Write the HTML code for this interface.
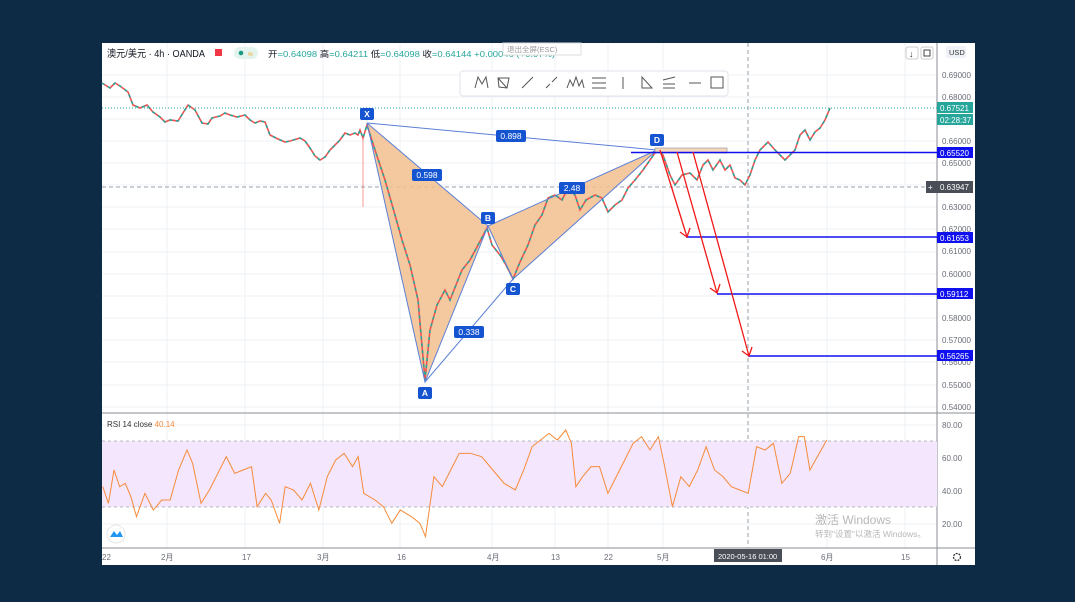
<!DOCTYPE html>
<html><head><meta charset="utf-8"><style>
body{margin:0;width:1075px;height:602px;background:#0d2b45;overflow:hidden;font-family:"Liberation Sans","Noto Sans CJK SC",sans-serif}
svg{position:absolute;left:0;top:0}
.t{font-size:8px;fill:#6a6d78}
</style></head><body>
<svg width="1075" height="602" viewBox="0 0 1075 602">
<rect x="102" y="43" width="873" height="522" fill="#fff"/>
<g stroke="#eef2f6" stroke-width="1">
<line x1="102" y1="75" x2="937" y2="75"/><line x1="102" y1="97" x2="937" y2="97"/><line x1="102" y1="119" x2="937" y2="119"/><line x1="102" y1="141" x2="937" y2="141"/><line x1="102" y1="163" x2="937" y2="163"/><line x1="102" y1="185" x2="937" y2="185"/><line x1="102" y1="207" x2="937" y2="207"/><line x1="102" y1="229" x2="937" y2="229"/><line x1="102" y1="252" x2="937" y2="252"/><line x1="102" y1="274" x2="937" y2="274"/><line x1="102" y1="296" x2="937" y2="296"/><line x1="102" y1="318" x2="937" y2="318"/><line x1="102" y1="340" x2="937" y2="340"/><line x1="102" y1="362" x2="937" y2="362"/><line x1="102" y1="385" x2="937" y2="385"/><line x1="102" y1="407" x2="937" y2="407"/>
<line x1="102" y1="425" x2="937" y2="425"/><line x1="102" y1="458" x2="937" y2="458"/><line x1="102" y1="491" x2="937" y2="491"/><line x1="102" y1="524" x2="937" y2="524"/>
<line x1="167" y1="43" x2="167" y2="548"/><line x1="245" y1="43" x2="245" y2="548"/><line x1="323" y1="43" x2="323" y2="548"/><line x1="400" y1="43" x2="400" y2="548"/><line x1="492" y1="43" x2="492" y2="548"/><line x1="555" y1="43" x2="555" y2="548"/><line x1="608" y1="43" x2="608" y2="548"/><line x1="663" y1="43" x2="663" y2="548"/><line x1="827" y1="43" x2="827" y2="548"/><line x1="905" y1="43" x2="905" y2="548"/>
</g>
<line x1="937" y1="43" x2="937" y2="565" stroke="#8a8e96"/>
<line x1="102" y1="413" x2="975" y2="413" stroke="#8a8e96"/>
<line x1="102" y1="548" x2="975" y2="548" stroke="#8a8e96"/>
<line x1="102" y1="108" x2="937" y2="108" stroke="#26a69a" stroke-dasharray="1,2"/>
<line x1="102" y1="187" x2="937" y2="187" stroke="#9aa0a8" stroke-dasharray="4,3"/>
<line x1="748" y1="43" x2="748" y2="548" stroke="#9aa0a8" stroke-dasharray="4,3"/>
<polygon points="367,123 425,382 488,226" fill="#f2c08e" fill-opacity=".85"/>
<polygon points="488,226 513,279 657,150" fill="#f2c08e" fill-opacity=".85"/>
<polyline fill="none" stroke="#ef5350" stroke-width="1.6" points="102,83 110,88 115,83 120,86 128,92 133,105 140,108 147,105 153,112 160,117 165,122 170,120 178,121 183,113 188,105 195,110 202,123 208,124 212,118 220,116 225,113 230,115 237,117 245,115 250,120 255,123 260,121 265,122 270,135 278,139 285,142 290,141 300,138 305,141 310,148 315,156 320,160 325,157 330,150 335,145 340,140 345,133 350,135 355,133 358,135 360,130 363,138 367,125 375,150 385,180 395,215 402,240 410,265 418,300 425,380 430,330 437,305 445,290 450,300 456,285 462,270 470,260 478,245 487,228 492,245 500,255 506,265 513,279 520,262 528,245 535,225 542,215 548,198 555,195 562,200 568,188 575,195 580,210 586,200 595,195 602,198 608,212 615,205 622,200 628,188 635,180 643,170 650,160 657,150 663,155 670,175 675,185 682,175 690,173 697,180 703,165 708,160 713,170 720,160 725,170 730,165 735,178 740,180 745,185 750,175 755,160 760,150 768,142 775,150 780,155 785,160 790,155 795,150 800,135 805,130 810,140 815,132 820,128 825,120 830,108"/>
<polyline fill="none" stroke="#26a69a" stroke-width="1.6" stroke-dasharray="3,4" points="102,83 110,88 115,83 120,86 128,92 133,105 140,108 147,105 153,112 160,117 165,122 170,120 178,121 183,113 188,105 195,110 202,123 208,124 212,118 220,116 225,113 230,115 237,117 245,115 250,120 255,123 260,121 265,122 270,135 278,139 285,142 290,141 300,138 305,141 310,148 315,156 320,160 325,157 330,150 335,145 340,140 345,133 350,135 355,133 358,135 360,130 363,138 367,125 375,150 385,180 395,215 402,240 410,265 418,300 425,380 430,330 437,305 445,290 450,300 456,285 462,270 470,260 478,245 487,228 492,245 500,255 506,265 513,279 520,262 528,245 535,225 542,215 548,198 555,195 562,200 568,188 575,195 580,210 586,200 595,195 602,198 608,212 615,205 622,200 628,188 635,180 643,170 650,160 657,150 663,155 670,175 675,185 682,175 690,173 697,180 703,165 708,160 713,170 720,160 725,170 730,165 735,178 740,180 745,185 750,175 755,160 760,150 768,142 775,150 780,155 785,160 790,155 795,150 800,135 805,130 810,140 815,132 820,128 825,120 830,108"/>
<line x1="363" y1="138" x2="363" y2="207" stroke="#ef5350" stroke-opacity=".6"/>
<g stroke="#5b7fd6" stroke-width="1" fill="none">
<polyline points="367,123 425,382 488,226 513,279 657,150"/>
<line x1="367" y1="123" x2="488" y2="226"/><line x1="425" y1="382" x2="513" y2="279"/>
<line x1="488" y1="226" x2="657" y2="150"/><line x1="367" y1="123" x2="657" y2="150"/>
</g>
<rect x="655" y="148" width="72" height="5" fill="#f6d7bd" stroke="#999" stroke-width=".7"/>
<g stroke="#1010ee" stroke-width="1.5">
<line x1="631" y1="152.5" x2="937" y2="152.5"/><line x1="686" y1="237" x2="937" y2="237"/><line x1="717" y1="294" x2="937" y2="294"/><line x1="748" y1="356" x2="937" y2="356"/></g>
<g stroke="#f01818" stroke-width="1.3" fill="none">
<line x1="660" y1="150" x2="687" y2="237"/><polyline points="680,232 687,237 690,228"/>
<line x1="677" y1="152" x2="717" y2="293"/><polyline points="710,288 717,293 720,284"/>
<line x1="693" y1="152" x2="749" y2="356"/><polyline points="742,351 749,356 752,347"/>
</g>
<g font-size="8.5" fill="#fff" text-anchor="middle" font-weight="bold">
<rect x="360" y="108" width="14" height="12" rx="2" fill="#1554d1"/><text x="367" y="117">X</text>
<rect x="418" y="387" width="14" height="12" rx="2" fill="#1554d1"/><text x="425" y="396">A</text>
<rect x="481" y="212" width="14" height="12" rx="2" fill="#1554d1"/><text x="488" y="221">B</text>
<rect x="506" y="283" width="14" height="12" rx="2" fill="#1554d1"/><text x="513" y="292">C</text>
<rect x="650" y="134" width="14" height="12" rx="2" fill="#1554d1"/><text x="657" y="143">D</text>
<g font-weight="normal"><rect x="496" y="130" width="30" height="12" rx="2" fill="#1554d1"/><text x="511" y="139">0.898</text>
<rect x="412" y="169" width="30" height="12" rx="2" fill="#1554d1"/><text x="427" y="178">0.598</text>
<rect x="559" y="182" width="26" height="12" rx="2" fill="#1554d1"/><text x="572" y="191">2.48</text>
<rect x="454" y="326" width="30" height="12" rx="2" fill="#1554d1"/><text x="469" y="335">0.338</text></g>
</g>
<rect x="460" y="71" width="268" height="25" rx="3" fill="#fff" stroke="#e0e3eb"/>
<g stroke="#555" stroke-width="1" fill="none">
<path d="M475 88 L478 77 L482 84 L486 77 L488 88"/><path d="M498 78 L509 78 L507 88 L499 87 Z M498 78 L507 88"/><path d="M522 88 L533 77"/><path d="M546 88 L550 84 M552 82 L557 77"/><path d="M567 88 L570 80 L573 86 L576 77 L579 86 L582 80 L584 88"/><path d="M592 78 H606 M592 83 H606 M592 88 H606"/><path d="M623 77 V89"/><path d="M642 77 L642 88 L652 88 Z"/><path d="M663 80 L675 77 M663 84 H675 M663 88 H675"/><path d="M689 83 H701"/><rect x="711" y="77" width="12" height="11"/>
</g>
<text x="107" y="57" font-size="10" fill="#131722" textLength="98" lengthAdjust="spacingAndGlyphs">澳元/美元 · 4h · OANDA</text>
<rect x="215" y="49" width="7" height="7" fill="#f23645"/>
<rect x="234" y="47" width="24" height="12" rx="6" fill="#e3f3ee"/><circle cx="241" cy="53" r="2.3" fill="#1a9985"/><text x="248" y="57" font-size="9" fill="#f7a21b">≈</text>
<text x="268" y="57" font-size="8.5" fill="#131722" textLength="287" lengthAdjust="spacingAndGlyphs">开<tspan fill="#26a69a">=0.64098</tspan> 高<tspan fill="#26a69a">=0.64211</tspan> 低<tspan fill="#26a69a">=0.64098</tspan> 收<tspan fill="#26a69a">=0.64144 +0.00046 (+0.07%)</tspan></text>
<rect x="503" y="43" width="78" height="12" fill="#fff" stroke="#ddd"/><text x="507" y="52" font-size="7.5" fill="#999">退出全屏(ESC)</text>
<rect x="906" y="47" width="12" height="12" rx="2" fill="#fff" stroke="#ccc"/><text x="909" y="57" font-size="9" fill="#333">↓</text>
<rect x="921" y="47" width="12" height="12" rx="2" fill="#fff" stroke="#ccc"/><rect x="924" y="50" width="6" height="6" fill="none" stroke="#444"/>
<rect x="946" y="46" width="20" height="12" rx="2" fill="#eef1f5"/><text x="949" y="55" font-size="7.5" fill="#333">USD</text>
<g class="t"><text x="942" y="78">0.69000</text><text x="942" y="100">0.68000</text><text x="942" y="144">0.66000</text><text x="942" y="166">0.65000</text><text x="942" y="210">0.63000</text><text x="942" y="232">0.62000</text><text x="942" y="254">0.61000</text><text x="942" y="277">0.60000</text><text x="942" y="321">0.58000</text><text x="942" y="343">0.57000</text><text x="942" y="365">0.56000</text><text x="942" y="388">0.55000</text><text x="942" y="410">0.54000</text>
<text x="942" y="428">80.00</text><text x="942" y="461">60.00</text><text x="942" y="494">40.00</text><text x="942" y="527">20.00</text></g>
<g font-size="8" fill="#fff">
<rect x="937" y="102" width="36" height="11" fill="#26a69a"/><text x="940" y="111">0.67521</text>
<rect x="937" y="114" width="36" height="11" fill="#26a69a"/><text x="940" y="123">02:28:37</text>
<rect x="937" y="147" width="36" height="11" fill="#1010ee"/><text x="940" y="156">0.65520</text>
<rect x="926" y="181" width="11" height="12" fill="#4a4e56"/><text x="928" y="190">+</text>
<rect x="937" y="181" width="36" height="12" fill="#4a4e56"/><text x="940" y="190">0.63947</text>
<rect x="937" y="232" width="36" height="11" fill="#1010ee"/><text x="940" y="241">0.61653</text>
<rect x="937" y="288" width="36" height="11" fill="#1010ee"/><text x="940" y="297">0.59112</text>
<rect x="937" y="350" width="36" height="11" fill="#1010ee"/><text x="940" y="359">0.56265</text>
</g>
<rect x="102" y="441" width="835" height="66" fill="#f3e6fd"/>
<line x1="102" y1="441" x2="937" y2="441" stroke="#b7b9c2" stroke-dasharray="3,3"/>
<line x1="102" y1="507" x2="937" y2="507" stroke="#b7b9c2" stroke-dasharray="3,3"/>
<g transform="translate(100,410) scale(0.5612,0.3333)">
<polyline fill="none" stroke="#f68b3a" stroke-width="1" vector-effect="non-scaling-stroke" points="5,230 15,280 25,180 35,230 45,220 55,260 65,320 80,250 95,300 110,270 125,270 140,180 155,120 165,160 180,280 195,240 210,190 225,140 240,190 255,180 270,170 280,290 295,250 305,270 320,340 330,230 345,240 360,270 375,220 390,300 405,200 420,150 435,130 450,170 460,140 470,250 490,270 505,290 520,340 535,300 555,320 570,340 580,380 595,200 610,230 625,180 640,130 660,130 680,140 700,180 720,220 740,240 755,180 770,110 785,90 800,70 815,90 830,60 840,100 848,230 860,200 875,170 890,170 905,250 920,200 935,150 950,100 965,80 980,120 995,80 1005,160 1020,290 1035,200 1050,230 1065,180 1080,110 1095,180 1110,200 1125,230 1140,240 1155,250 1170,110 1185,120 1200,100 1215,220 1230,190 1245,80 1255,80 1265,180 1275,150 1285,120 1295,90"/>
</g>
<text x="107" y="427" font-size="8" fill="#333">RSI 14 close <tspan fill="#f68b3a">40.14</tspan></text>
<circle cx="116" cy="534" r="9" fill="#fff" stroke="#e5e5e5"/><path d="M110 537 L114 531 L117 535 L120 531 L123 537 Z" fill="#2196f3"/>
<text x="815" y="524" font-size="12" fill="#b8b8b8">激活 Windows</text>
<text x="815" y="537" font-size="8.5" fill="#b8b8b8">转到"设置"以激活 Windows。</text>
<g class="t"><text x="102" y="560">22</text><text x="161" y="560">2月</text><text x="242" y="560">17</text><text x="317" y="560">3月</text><text x="397" y="560">16</text><text x="487" y="560">4月</text><text x="551" y="560">13</text><text x="604" y="560">22</text><text x="657" y="560">5月</text><text x="821" y="560">6月</text><text x="901" y="560">15</text></g>
<rect x="714" y="549" width="68" height="13" fill="#4a4e56"/><text x="718" y="559" font-size="7.5" fill="#fff">2020-05-16   01:00</text>
<circle cx="957" cy="557" r="3.5" fill="none" stroke="#333" stroke-width="1.3" stroke-dasharray="2,1"/>
</svg>
</body></html>
